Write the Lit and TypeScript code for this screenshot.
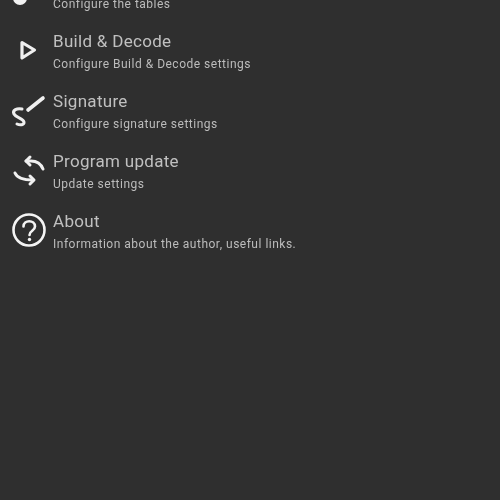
import { LitElement, html, css, svg } from "lit";
import { customElement } from "lit/decorators.js";

const icons: Record<string, unknown> = {
  settings: svg`<circle cx="20" cy="27" r="7" fill="#f2f2f2"/>`,
  build: svg`<path d="M22 11.5 L34.5 19 L22 27 Z" fill="none" stroke="#f0f0f0" stroke-width="3.2" stroke-linejoin="round"/>`,
  sign: svg`<path d="M28 19 L43 7" fill="none" stroke="#f0f0f0" stroke-width="3.6" stroke-linecap="round"/>
    <path d="M22 18 C17 17 12 19 14 23 C16 27 23 27 24 31 C24.5 34 20 34.5 17 33" fill="none" stroke="#eee" stroke-width="3" stroke-linecap="round"/>`,
  update: svg`<path d="M26 10 L31 10 C37 10 41 13 43 18" fill="none" stroke="#f0f0f0" stroke-width="3" stroke-linecap="round"/>
    <path d="M30 6 L26 10 L30 14" fill="none" stroke="#f0f0f0" stroke-width="3" stroke-linecap="round" stroke-linejoin="round"/>
    <path d="M15 22 C17 27 23 29 33 29" fill="none" stroke="#f0f0f0" stroke-width="3" stroke-linecap="round"/>
    <path d="M30 25 L34 29 L30 33" fill="none" stroke="#f0f0f0" stroke-width="3" stroke-linecap="round" stroke-linejoin="round"/>`,
  about: svg`<circle cx="29" cy="19" r="15.5" fill="none" stroke="#f4f4f4" stroke-width="2.6"/>
    <path d="M23.5 15.5 C23.5 8.5 35 8.5 35 15.5 C35 20 29.5 19.5 29.5 24" fill="none" stroke="#f4f4f4" stroke-width="2.6" stroke-linecap="round"/>
    <circle cx="29.5" cy="28.5" r="1.7" fill="#f4f4f4"/>`,
};

const rows = [
  { icon: "settings", title: "Settings", sub: "Configure the tables" },
  { icon: "build", title: "Build & Decode", sub: "Configure Build & Decode settings" },
  { icon: "sign", title: "Signature", sub: "Configure signature settings" },
  { icon: "update", title: "Program update", sub: "Update settings" },
  { icon: "about", title: "About", sub: "Information about the author, useful links." },
];

@customElement("app-root")
export class AppRoot extends LitElement {
  static styles = css`
    :host {
      display: block;
      width: 500px;
      height: 500px;
      overflow: hidden;
      background: #2f2f2f;
      font-family: Roboto, "Liberation Sans", sans-serif;
    }
    .list {
      display: flex;
      flex-direction: column;
      margin-top: -29px;
      filter: blur(0.7px);
    }
    .row {
      display: flex;
      align-items: flex-start;
      height: 60px;
    }
    .icon {
      flex: none;
      width: 53px;
      height: 60px;
      overflow: visible;
    }
    .text {
      display: flex;
      flex-direction: column;
      margin-top: -1px;
    }
    .title {
      font-size: 17px;
      line-height: 22px;
      color: #c0c0c0;
      letter-spacing: 0.3px;
      white-space: nowrap;
    }
    .sub {
      font-size: 12px;
      line-height: 16px;
      margin-top: 4px;
      color: #bcbcbc;
      letter-spacing: 0.5px;
      white-space: nowrap;
    }
  `;

  render() {
    return html`<div class="list">
      ${rows.map(
        (r) => html`<div class="row">
          <svg class="icon" viewBox="0 0 53 60">${icons[r.icon]}</svg>
          <div class="text">
            <span class="title">${r.title}</span>
            <span class="sub">${r.sub}</span>
          </div>
        </div>`
      )}
    </div>`;
  }
}
